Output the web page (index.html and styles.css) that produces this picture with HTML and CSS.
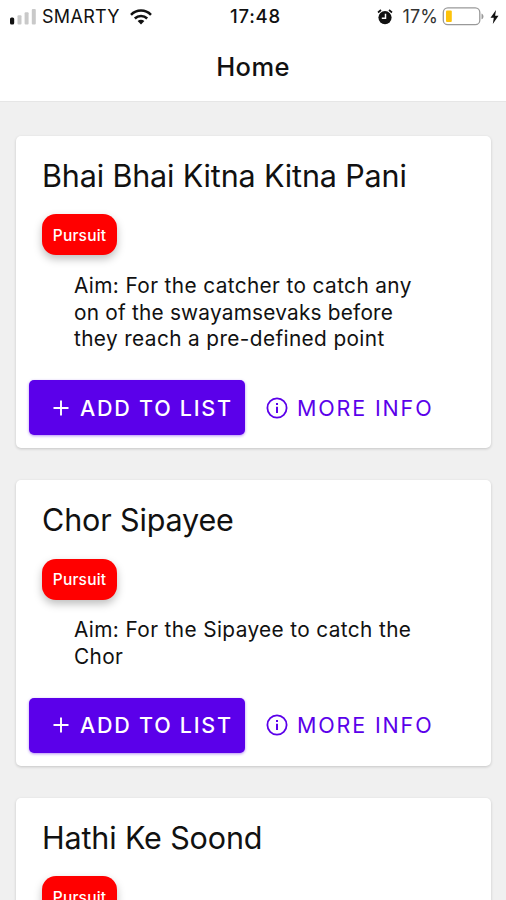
FILE: index.html
```html
<!DOCTYPE html>
<html lang="en">
<head>
<meta charset="utf-8">
<title>Home</title>
<link rel="stylesheet" href="styles.css">
</head>
<body>
<svg class="defs" width="0" height="0">
  <symbol id="plus" viewBox="0 0 18 18"><path d="M9 1.5v15M1.5 9h15" stroke="currentColor" stroke-width="1.9" fill="none"/></symbol>
  <symbol id="info" viewBox="0 0 22 22"><circle cx="11" cy="11" r="9.6" stroke="currentColor" stroke-width="1.8" fill="none"/><path d="M10 9.8h2v6.2h-2zM10 6h2v2h-2z" fill="currentColor"/></symbol>
</svg>
<header class="top">
  <div class="status">
    <div class="carrier">
      <svg class="signal" width="27" height="16" viewBox="0 0 27 16"><rect x="0" y="8.5" width="4.2" height="7" rx="1.5" fill="#111"/><g fill="#c9c9c9"><rect x="7.5" y="6.3" width="4" height="9.2" rx="1"/><rect x="14.6" y="3.3" width="4" height="12.2" rx="1"/><rect x="21.8" y="0" width="4" height="15.5" rx="1"/></g></svg>
      <span class="network">SMARTY</span>
      <svg class="wifi" width="22" height="16" viewBox="0 0 22 16"><g fill="none" stroke="#111" stroke-width="2.5"><path d="M1 5.8C6.5.2 15.5.2 21 5.8"/><path d="M4.8 9.5c3.5-3.5 8.9-3.5 12.4 0"/></g><path d="M7.6 12.1c2-1.8 4.8-1.8 6.8 0L11 15.5z" fill="#111"/></svg>
    </div>
    <span class="time">17:48</span>
    <div class="power">
      <svg class="alarm" width="16" height="16" viewBox="0 0 16 16"><circle cx="8" cy="8.6" r="6.6" fill="#111"/><path d="M1 3.5 4 1M15 3.5 12 1" stroke="#111" stroke-width="1.7"/><path d="M8.5 4.8v4.4H4.8" fill="none" stroke="#fff" stroke-width="1.5"/></svg>
      <span class="percent">17%</span>
      <svg class="battery" width="42" height="19" viewBox="0 0 42 19"><rect x="1.3" y=".9" width="36.5" height="16.8" rx="4.5" fill="#fff" stroke="#999" stroke-width="1.3"/><rect x="4" y="3.5" width="5.8" height="11.6" rx="1" fill="#fdc30b"/><path d="M39.5 6.5c2.6.8 2.6 5 0 5.8z" fill="#999"/></svg>
      <svg class="bolt" width="9" height="14" viewBox="0 0 9 14"><path d="M6 0 .5 7.8h3.3L2.8 14 8.5 5.7H5.1z" fill="#111"/></svg>
    </div>
  </div>
  <h1 class="screen-title">Home</h1>
</header>
<main class="list">
  <article class="card">
    <h2 class="name">Bhai Bhai Kitna Kitna Pani</h2>
    <span class="tag">Pursuit</span>
    <p class="aim">Aim: For the catcher to catch any<br><span class="tight">on of the swayamsevaks before</span><br>they reach a pre-defined point</p>
    <div class="actions">
      <button class="add"><svg class="plus"><use href="#plus"/></svg>ADD TO LIST</button>
      <button class="more"><svg class="info"><use href="#info"/></svg>MORE INFO</button>
    </div>
  </article>
  <article class="card">
    <h2 class="name">Chor Sipayee</h2>
    <span class="tag">Pursuit</span>
    <p class="aim">Aim: For the Sipayee to catch the<br>Chor</p>
    <div class="actions">
      <button class="add"><svg class="plus"><use href="#plus"/></svg>ADD TO LIST</button>
      <button class="more"><svg class="info"><use href="#info"/></svg>MORE INFO</button>
    </div>
  </article>
  <article class="card">
    <h2 class="name">Hathi Ke Soond</h2>
    <span class="tag">Pursuit</span>
  </article>
</main>
</body>
</html>
```
FILE: styles.css
```css
* { box-sizing: border-box; }
body {
  margin: 0;
  height: 900px;
  overflow: hidden;
  display: flex;
  flex-direction: column;
  background: #f0f0f0;
  color: #111;
  font-family: Inter, "Liberation Sans", sans-serif;
}
.defs { display: none; }
.top {
  flex: none;
  height: 102px;
  background: #fff;
  border-bottom: 1px solid #e6e6e6;
}
.status {
  height: 33px;
  padding: 0 7px 0 10px;
  display: grid;
  grid-template-columns: 1fr auto 1fr;
  align-items: center;
  font-size: 18px;
}
.carrier, .power { display: flex; align-items: center; }
.power { justify-content: flex-end; }
.network { margin-left: 5px; letter-spacing: 0.3px; }
.wifi { margin-left: 10px; }
.time { margin-left: 2px; padding-bottom: 1px; font-size: 18.5px; font-weight: 500; letter-spacing: 0.8px; }
.percent { margin: 0 4px 0 10px; color: #333; letter-spacing: 0.1px; }
.bolt { margin-left: 6px; }
.screen-title {
  margin: 17px 0 0;
  font-size: 25.5px;
  line-height: 34px;
  font-weight: 500;
  letter-spacing: 0.4px;
  text-align: center;
}
.list {
  flex: 1;
  padding: 34px 15px 0 16px;
  display: flex;
  flex-direction: column;
  gap: 32.3px;
}
.card {
  flex: none;
  padding: 21px 13px 13px;
  background: #fff;
  border-radius: 5px;
  box-shadow: 0 1px 3px rgba(0, 0, 0, 0.18);
}
.name {
  margin: 0 13px 19.4px;
  font-size: 30.5px;
  line-height: 38px;
  font-weight: 400;
  letter-spacing: -0.14px;
  white-space: nowrap;
}
.tag {
  display: flex;
  align-items: center;
  justify-content: center;
  width: 75px;
  height: 41px;
  margin-left: 13px;
  padding-top: 1px;
  border-radius: 14px;
  background: #f00;
  color: #fff;
  font-size: 15.5px;
  font-weight: 500;
  letter-spacing: 0.2px;
  box-shadow: 0 4px 8px rgba(0, 0, 0, 0.26);
}
.aim {
  margin: 17.6px 0 27px 45px;
  font-size: 20.8px;
  line-height: 26.7px;
  letter-spacing: 0.38px;
  white-space: nowrap;
}
.tight { letter-spacing: 0.22px; }
.actions { display: flex; gap: 21px; }
.add, .more {
  display: flex;
  align-items: center;
  height: 55px;
  border: 0;
  padding: 0;
  background: none;
  color: #5b00ea;
  font-family: inherit;
  font-size: 21.5px;
  letter-spacing: 1.85px;
  white-space: nowrap;
}
.add {
  width: 216px;
  padding-left: 23px;
  border-radius: 5px;
  background: #5b00ea;
  color: #fff;
  font-weight: 500;
  letter-spacing: 1.75px;
  box-shadow: 0 1px 3px rgba(91, 0, 234, 0.45);
}
.plus { width: 18px; height: 18px; margin-right: 10px; }
.info { width: 22px; height: 22px; margin-right: 9px; }
```
